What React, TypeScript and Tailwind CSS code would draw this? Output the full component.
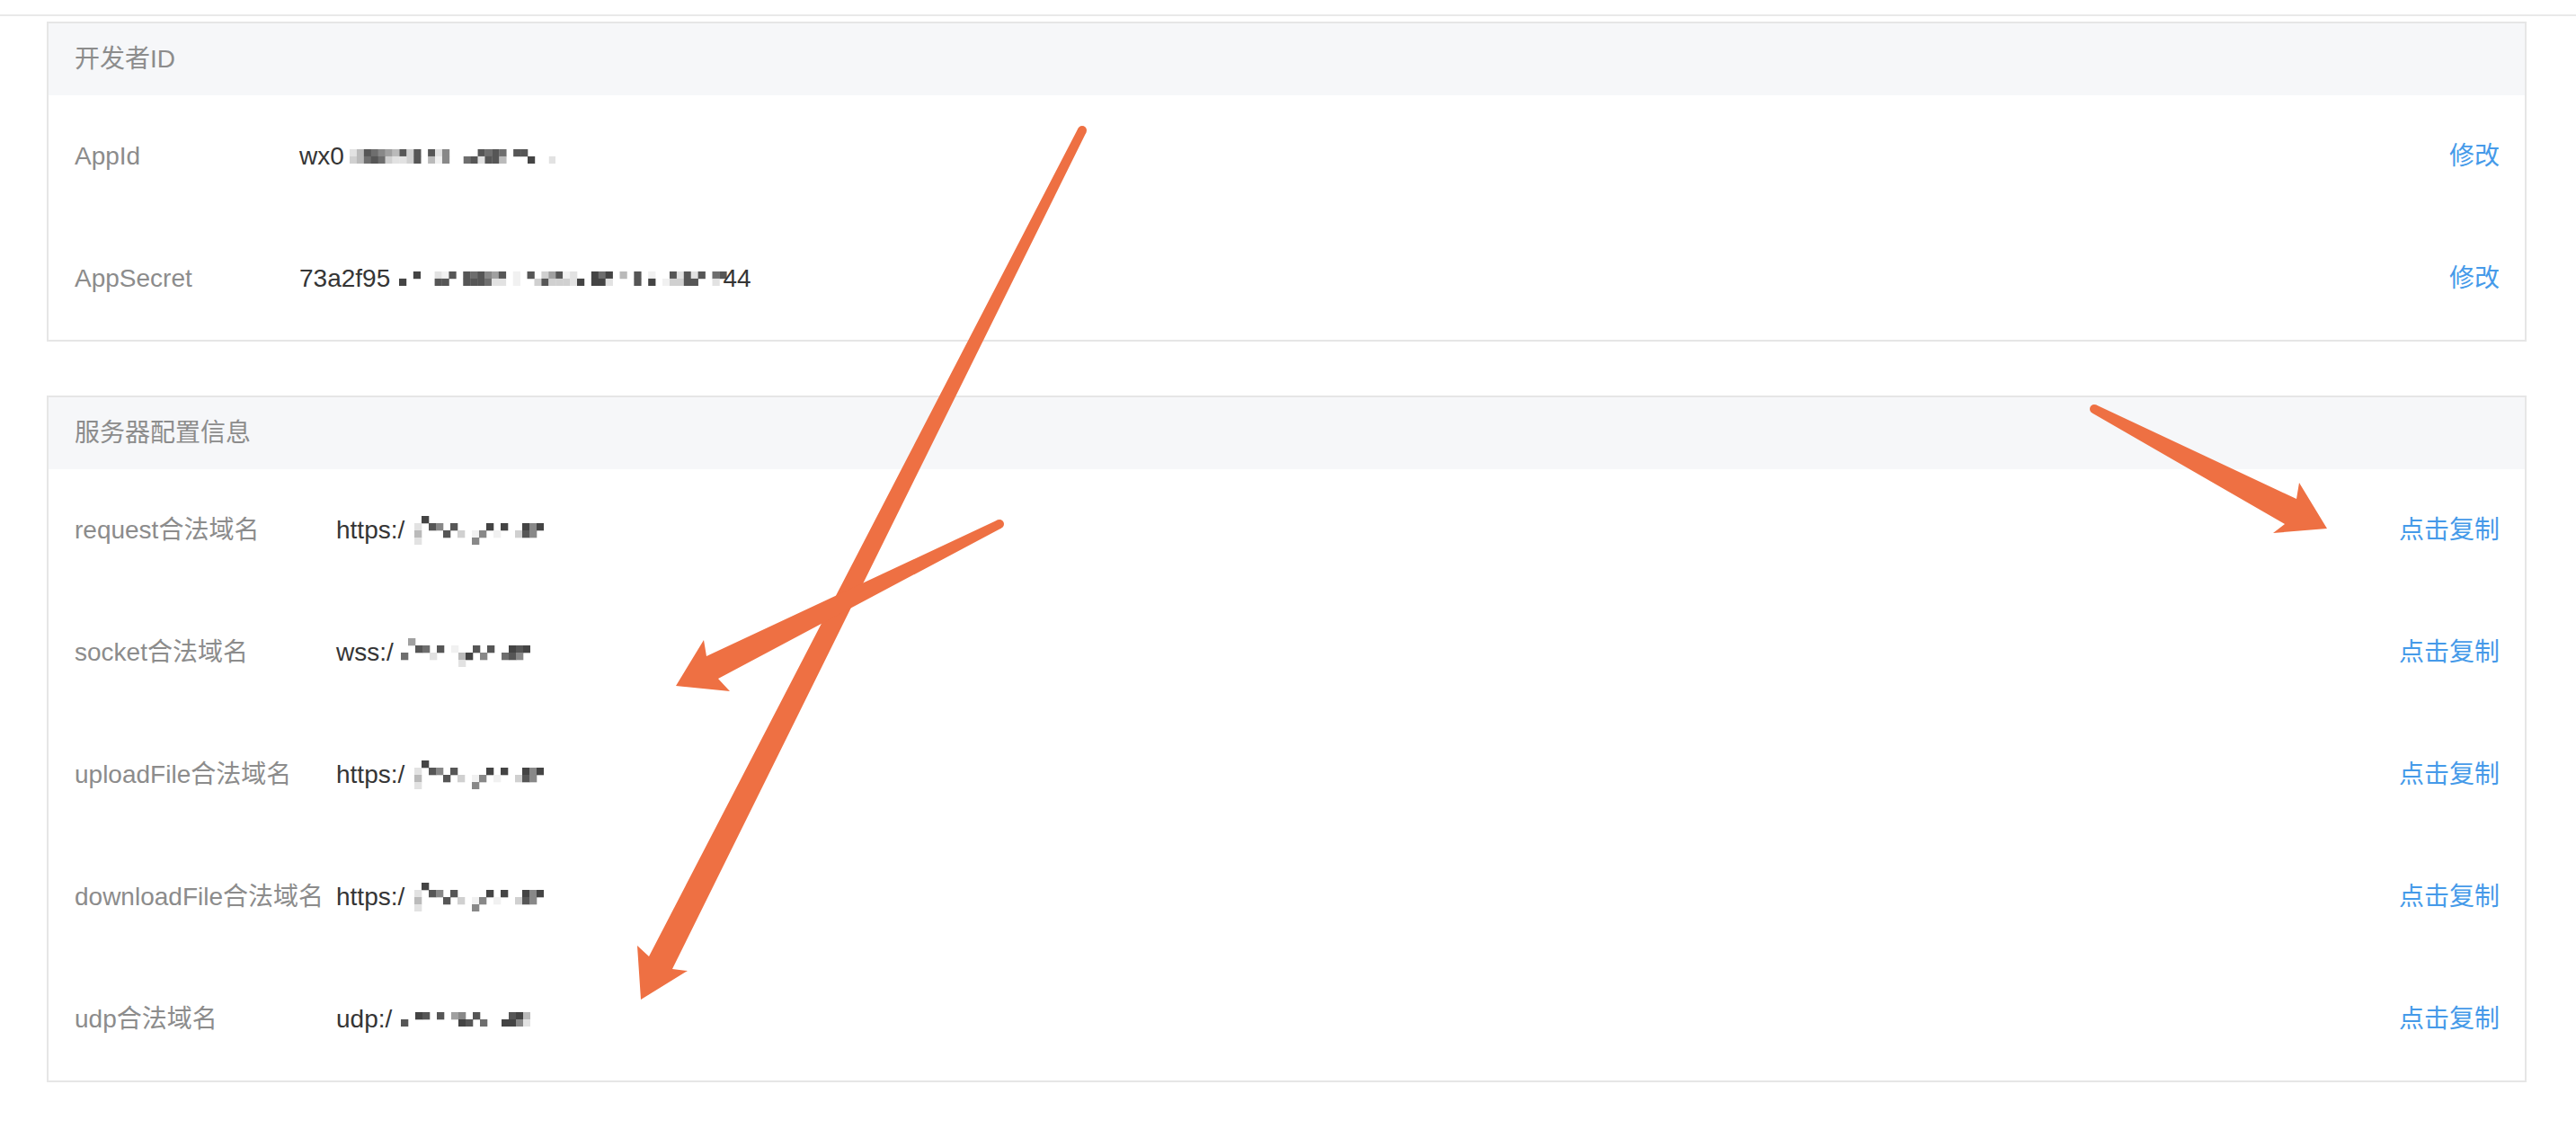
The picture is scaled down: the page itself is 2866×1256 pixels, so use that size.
import React from "react";

const shade: Record<string, string> = {
  "1": "#f1f1f1",
  "2": "#e2e2e2",
  "3": "#d0d0d0",
  "4": "#bababa",
  "5": "#a0a0a0",
  "6": "#888888",
  "7": "#6e6e6e",
  "8": "#565656",
  "9": "#444444",
};

function Mosaic({ rows, cell = 8 }: { rows: string[]; cell?: number }) {
  const cols = rows[0].length;
  return (
    <svg width={cols * cell} height={rows.length * cell} className="shrink-0">
      {rows.flatMap((r, i) =>
        r.split("").map((c, j) =>
          c === "0" ? null : (
            <rect
              key={`${i}-${j}`}
              x={j * cell}
              y={i * cell}
              width={cell + 0.3}
              height={cell + 0.3}
              fill={shade[c]}
            />
          )
        )
      )}
    </svg>
  );
}

const appIdRows = ["24876548380826000087870880000", "34787322380416007828840009002"];
const secretRows = [
  "0090021808786580108035812009790408010082828078",
  "9000088008887220100383332909920008090133880020",
];
const httpsRows = [
  "090000000000000000",
  "208608000090900969",
  "400080301601003860",
  "200000006000000000",
];
const wssRows = [
  "050000000000000000",
  "008708010080800989",
  "700020004906007860",
  "000000002000000000",
];
const udpRows = ["009808056080000894", "800000009807009962"];

function Row({
  label,
  value,
  action,
  labelW,
}: {
  label: string;
  value: React.ReactNode;
  action: string;
  labelW: "a" | "b";
}) {
  return (
    <div className="flex h-[136px] items-center pl-[29px] pr-[28px]">
      <div
        className={
          labelW === "a"
            ? "w-[250px] shrink-0 text-[#8c8c8c]"
            : "w-[291px] shrink-0 text-[#8c8c8c]"
        }
      >
        {label}
      </div>
      <div className="flex flex-1 items-center text-[#353535]">{value}</div>
      <span className="cursor-pointer text-[#459ae9]">{action}</span>
    </div>
  );
}

function Header({ title }: { title: string }) {
  return (
    <div className="flex h-[80px] items-center bg-[#f6f7f9] px-[29px] text-[#8c8c8c]">
      {title}
    </div>
  );
}

export default function App() {
  return (
    <div className="relative h-[1256px] w-full overflow-hidden bg-white font-['Liberation_Sans','Noto_Sans_CJK_SC',sans-serif] text-[28px] leading-normal">
      <div className="mt-[16px] border-t-2 border-[#e9e9e9]" />

      <div className="ml-[52px] mr-[55px] mt-[6px] border-2 border-[#e6e6e6]">
        <Header title="开发者ID" />
        <Row
          labelW="a"
          label="AppId"
          action="修改"
          value={
            <>
              <span>wx0</span>
              <span className="ml-[6px] flex">
                <Mosaic rows={appIdRows} cell={7.92} />
              </span>
            </>
          }
        />
        <Row
          labelW="a"
          label="AppSecret"
          action="修改"
          value={
            <>
              <span>73a2f95</span>
              <span className="ml-[10px] flex">
                <Mosaic rows={secretRows} cell={7.92} />
              </span>
              <span className="-ml-[4px]">44</span>
            </>
          }
        />
      </div>

      <div className="ml-[52px] mr-[55px] mt-[60px] border-2 border-[#e6e6e6]">
        <Header title="服务器配置信息" />
        <Row
          labelW="b"
          label="request合法域名"
          action="点击复制"
          value={
            <>
              <span>https:/</span>
              <span className="ml-[11px] flex">
                <Mosaic rows={httpsRows} />
              </span>
            </>
          }
        />
        <Row
          labelW="b"
          label="socket合法域名"
          action="点击复制"
          value={
            <>
              <span>wss:/</span>
              <span className="ml-[8px] flex">
                <Mosaic rows={wssRows} />
              </span>
            </>
          }
        />
        <Row
          labelW="b"
          label="uploadFile合法域名"
          action="点击复制"
          value={
            <>
              <span>https:/</span>
              <span className="ml-[11px] flex">
                <Mosaic rows={httpsRows} />
              </span>
            </>
          }
        />
        <Row
          labelW="b"
          label="downloadFile合法域名"
          action="点击复制"
          value={
            <>
              <span>https:/</span>
              <span className="ml-[11px] flex">
                <Mosaic rows={httpsRows} />
              </span>
            </>
          }
        />
        <Row
          labelW="b"
          label="udp合法域名"
          action="点击复制"
          value={
            <>
              <span>udp:/</span>
              <span className="ml-[10px] flex">
                <Mosaic rows={udpRows} />
              </span>
            </>
          }
        />
      </div>

      <svg
        className="pointer-events-none absolute left-0 top-0"
        width={2866}
        height={1256}
        viewBox="0 0 2866 1256"
      >
        <g fill="#EE7043">
          <polygon points="1208.5,147.3 748,1078 765,1080 713,1112 709,1052 722,1064 1199.5,142.7" />
          <circle cx={1204} cy={145} r={5} />
          <polygon points="1109.8,578.5 786,730 783,712 752,763 812,769 799,755 1114.2,587.5" />
          <circle cx={1112} cy={583} r={5} />
          <polygon points="2332.3,450.5 2555,555 2558,537 2589,588 2529,593 2542,583 2327.7,459.5" />
          <circle cx={2330} cy={455} r={5} />
        </g>
      </svg>
    </div>
  );
}
